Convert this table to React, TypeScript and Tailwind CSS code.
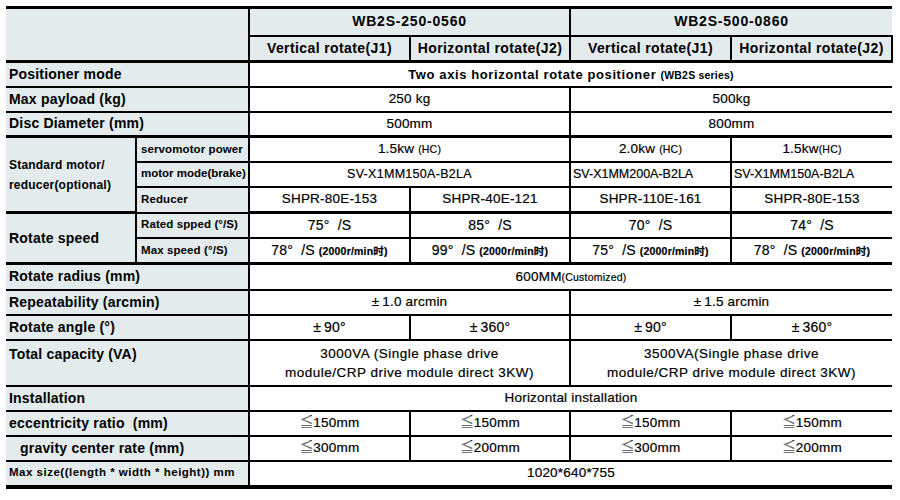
import React from "react";
import { twMerge } from "tailwind-merge";

const GRAY = "bg-[#e3ebed]";

type CellProps = {
  children?: React.ReactNode;
  cs?: number;
  rs?: number;
  className?: string;
};

// every cell carries its own grid lines; outer left/right edges stay open
const Cell = ({ children, cs, rs, className = "" }: CellProps) => (
  <td colSpan={cs} rowSpan={rs} className={twMerge("p-0 border-2 border-solid border-black whitespace-nowrap", className)}>
    {children}
  </td>
);

const Label = ({ children, cs = 2, rs, className = "" }: CellProps) => (
  <Cell cs={cs} rs={rs} className={twMerge(GRAY, "border-l-0 text-left pl-[3px] font-bold text-[14px] tracking-[0.2px]", className)}>
    {children}
  </Cell>
);

const Sub = ({ children, className = "" }: CellProps) => (
  <Cell className={twMerge(GRAY, "text-left pl-[4px] font-bold text-[11.5px] tracking-[0.1px]", className)}>{children}</Cell>
);

const Data = ({ children, cs, className = "" }: CellProps) => (
  <Cell cs={cs} className={twMerge("bg-white text-center text-[13.5px] tracking-[0.2px] [-webkit-text-stroke:0.2px_black]", className)}>
    {children}
  </Cell>
);

const Small = ({ children, bold }: { children: React.ReactNode; bold?: boolean }) => (
  <span className={bold ? "text-[10.5px] font-bold tracking-[0.2px]" : "text-[10.5px]"}>{children}</span>
);

const Deg = ({ n }: { n: string }) => (
  <span className="text-[14px]">
    {n}°&nbsp;&nbsp;/S
  </span>
);

const Pm = ({ v }: { v: string }) => (
  <span>
    <span className="mr-[3px]">±</span>
    {v}
  </span>
);

const Le = ({ v }: { v: string }) => (
  <span>
    <span className="text-[#8a8a8a]">≦</span>
    {v}
  </span>
);

export default function App() {
  return (
    <div className="w-[900px] h-[500px] bg-white pt-[6px] pl-[6px] text-black" style={{ fontFamily: '"Liberation Sans", "Noto Sans CJK SC", sans-serif' }}>
      <table className="table-fixed border-collapse w-[886px] border-t-[3px] border-b-4 border-black">
        <colgroup>
          <col className="w-[130px]" />
          <col className="w-[113px]" />
          <col className="w-[161px]" />
          <col className="w-[160px]" />
          <col className="w-[161px]" />
          <col className="w-[161px]" />
        </colgroup>
        <tbody>
          <tr className="h-[28px]">
            <Cell cs={2} rs={2} className={`${GRAY} border-l-0 border-b-[3px]`} />
            <Cell cs={2} className={`${GRAY} text-center font-bold text-[14px] tracking-[0.8px]`}>WB2S-250-0560</Cell>
            <Cell cs={2} className={`${GRAY} border-r-0 text-center font-bold text-[14px] tracking-[0.8px]`}>WB2S-500-0860</Cell>
          </tr>
          <tr className="h-[26px]">
            {["Vertical rotate(J1)", "Horizontal rotate(J2)", "Vertical rotate(J1)", "Horizontal rotate(J2)"].map((h, i) => (
              <Cell key={i} className={`${GRAY} border-b-[3px] text-center font-bold text-[14px] tracking-[0.4px]`}>{h}</Cell>
            ))}
          </tr>

          <tr className="h-[25px]">
            <Label>Positioner mode</Label>
            <Data cs={4} className="border-r-0 font-bold text-[13px] tracking-[0.6px] [-webkit-text-stroke:0px_black]">
              Two axis horizontal rotate positioner <Small bold>(WB2S series)</Small>
            </Data>
          </tr>
          <tr className="h-[25px]">
            <Label>Max payload (kg)</Label>
            <Data cs={2}>250 kg</Data>
            <Data cs={2} className="border-r-0">500kg</Data>
          </tr>
          <tr className="h-[25px]">
            <Label className="border-b-[3px]">Disc Diameter (mm)</Label>
            <Data cs={2} className="border-b-[3px]">500mm</Data>
            <Data cs={2} className="border-b-[3px] border-r-0">800mm</Data>
          </tr>

          <tr className="h-[25px]">
            <Label cs={1} rs={3} className="text-[12px] leading-[20px] border-b-[3px] whitespace-normal">
              Standard motor/
              <br />
              reducer(optional)
            </Label>
            <Sub>servomotor power</Sub>
            <Data cs={2}>1.5kw <Small>(HC)</Small></Data>
            <Data>2.0kw <Small>(HC)</Small></Data>
            <Data className="border-r-0">1.5kw<Small>(HC)</Small></Data>
          </tr>
          <tr className="h-[25px]">
            <Sub className="tracking-normal">motor mode(brake)</Sub>
            <Data cs={2} className="text-[12.5px] tracking-[0.3px]">SV-X1MM150A-B2LA</Data>
            <Data className="text-left pl-[2px] text-[12.5px] tracking-normal">SV-X1MM200A-B2LA</Data>
            <Data className="text-left pl-[2px] text-[12.5px] tracking-normal border-r-0">SV-X1MM150A-B2LA</Data>
          </tr>
          <tr className="h-[26px]">
            <Sub>Reducer</Sub>
            <Data className="border-b-[3px]">SHPR-80E-153</Data>
            <Data className="border-b-[3px]">SHPR-40E-121</Data>
            <Data className="border-b-[3px]">SHPR-110E-161</Data>
            <Data className="border-b-[3px] border-r-0">SHPR-80E-153</Data>
          </tr>

          <tr className="h-[25px]">
            <Label cs={1} rs={2} className="border-b-[3px]">Rotate speed</Label>
            <Sub>Rated spped (°/S)</Sub>
            <Data><Deg n="75" /></Data>
            <Data><Deg n="85" /></Data>
            <Data><Deg n="70" /></Data>
            <Data className="border-r-0"><Deg n="74" /></Data>
          </tr>
          <tr className="h-[26px]">
            <Sub className="border-b-[3px]">Max speed (°/S)</Sub>
            {["78", "99", "75", "78"].map((n, i) => (
              <Data key={i} className={i === 3 ? "border-b-[3px] border-r-0" : "border-b-[3px]"}>
                <Deg n={n} /> <Small bold>(2000r/min时)</Small>
              </Data>
            ))}
          </tr>

          <tr className="h-[26px]">
            <Label>Rotate radius (mm)</Label>
            <Data cs={4} className="border-r-0">600MM<Small>(Customized)</Small></Data>
          </tr>
          <tr className="h-[25px]">
            <Label>Repeatability (arcmin)</Label>
            <Data cs={2}><Pm v="1.0 arcmin" /></Data>
            <Data cs={2} className="border-r-0"><Pm v="1.5 arcmin" /></Data>
          </tr>
          <tr className="h-[25px]">
            <Label>Rotate angle (°)</Label>
            <Data className="text-[14px]"><Pm v="90°" /></Data>
            <Data className="text-[14px]"><Pm v="360°" /></Data>
            <Data className="text-[14px]"><Pm v="90°" /></Data>
            <Data className="text-[14px] border-r-0"><Pm v="360°" /></Data>
          </tr>
          <tr className="h-[46px]">
            <Label className="align-top pt-[3px]">Total capacity (VA)</Label>
            <Data cs={2} className="leading-[19px] tracking-[0.5px]">
              3000VA (Single phase drive
              <br />
              module/CRP drive module direct 3KW)
            </Data>
            <Data cs={2} className="leading-[19px] tracking-[0.5px] border-r-0">
              3500VA(Single phase drive
              <br />
              module/CRP drive module direct 3KW)
            </Data>
          </tr>

          <tr className="h-[25px]">
            <Label>Installation</Label>
            <Data cs={4} className="border-r-0">Horizontal installation</Data>
          </tr>
          <tr className="h-[25px]">
            <Label className="whitespace-pre">eccentricity ratio  (mm)</Label>
            <Data><Le v="150mm" /></Data>
            <Data><Le v="150mm" /></Data>
            <Data><Le v="150mm" /></Data>
            <Data className="border-r-0"><Le v="150mm" /></Data>
          </tr>
          <tr className="h-[25px]">
            <Label className="pl-[14px]">gravity center rate (mm)</Label>
            <Data><Le v="300mm" /></Data>
            <Data><Le v="200mm" /></Data>
            <Data><Le v="300mm" /></Data>
            <Data className="border-r-0"><Le v="200mm" /></Data>
          </tr>
          <tr className="h-[26px]">
            <Label className="text-[11.5px] tracking-[0.5px]">Max size((length * width * height)) mm</Label>
            <Data cs={4} className="border-r-0">1020*640*755</Data>
          </tr>
        </tbody>
      </table>
    </div>
  );
}
